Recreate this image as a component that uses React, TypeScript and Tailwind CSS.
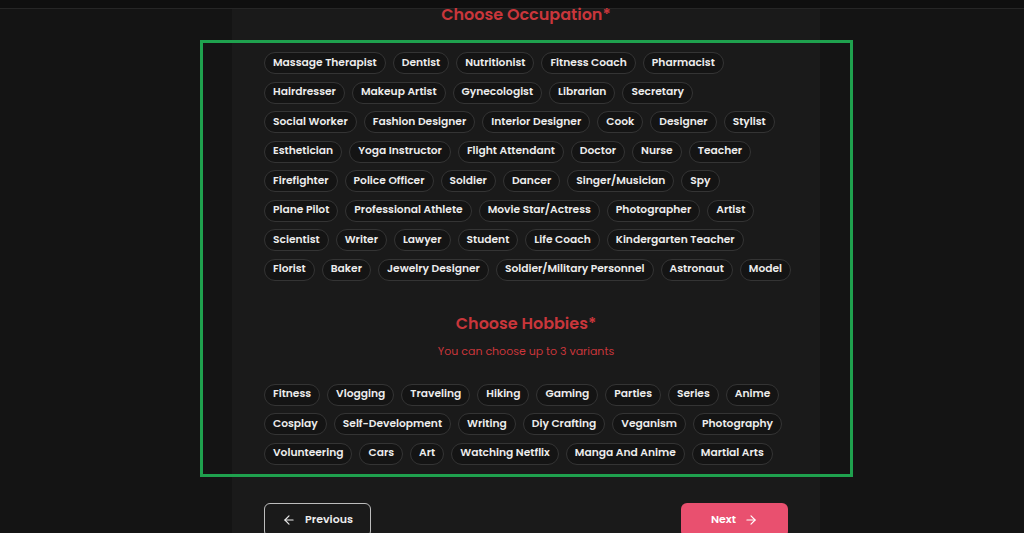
import { ArrowLeft, ArrowRight } from "lucide-react"

const occupationRows: string[][] = [
  ["Massage Therapist", "Dentist", "Nutritionist", "Fitness Coach", "Pharmacist"],
  ["Hairdresser", "Makeup Artist", "Gynecologist", "Librarian", "Secretary"],
  ["Social Worker", "Fashion Designer", "Interior Designer", "Cook", "Designer", "Stylist"],
  ["Esthetician", "Yoga Instructor", "Flight Attendant", "Doctor", "Nurse", "Teacher"],
  ["Firefighter", "Police Officer", "Soldier", "Dancer", "Singer/Musician", "Spy"],
  ["Plane Pilot", "Professional Athlete", "Movie Star/Actress", "Photographer", "Artist"],
  ["Scientist", "Writer", "Lawyer", "Student", "Life Coach", "Kindergarten Teacher"],
  ["Florist", "Baker", "Jewelry Designer", "Soldier/Military Personnel", "Astronaut", "Model"],
]

const hobbyRows: string[][] = [
  ["Fitness", "Vlogging", "Traveling", "Hiking", "Gaming", "Parties", "Series", "Anime"],
  ["Cosplay", "Self-Development", "Writing", "Diy Crafting", "Veganism", "Photography"],
  ["Volunteering", "Cars", "Art", "Watching Netflix", "Manga And Anime", "Martial Arts"],
]

function Chip({ label }: { label: string }) {
  return (
    <button className="h-[22px] shrink-0 whitespace-nowrap rounded-full border border-[#343434] bg-[#141414] px-[8px] text-[10.7px] font-semibold leading-none text-[#ececec]">
      {label}
    </button>
  )
}

function ChipRows({ rows }: { rows: string[][] }) {
  return (
    <div className="flex flex-col gap-y-[7.5px]">
      {rows.map((row, i) => (
        <div key={i} className="flex gap-x-[7px]">
          {row.map((label) => (
            <Chip key={label} label={label} />
          ))}
        </div>
      ))}
    </div>
  )
}

export default function App() {
  return (
    <div
      className="relative h-[533px] w-[1024px] overflow-hidden bg-[#141414]"
      style={{ fontFamily: "Poppins, Inter, 'Noto Sans', sans-serif" }}
    >
      <div className="h-[9px] border-b border-[#262626] bg-[#0f0f0f]" />

      <div className="ml-[232px] flex h-[524px] w-[588px] flex-col bg-[#1a1a1a] px-8">
        <h2 className="mt-[-2px] text-center text-[16px] font-semibold leading-[16px] text-[#c9363b]">
          Choose Occupation*
        </h2>

        <div className="mt-[29px]">
          <ChipRows rows={occupationRows} />
        </div>

        <h2 className="mt-[35px] text-center text-[16px] font-semibold leading-[16px] text-[#c9363b]">
          Choose Hobbies*
        </h2>
        <p className="mt-[13px] text-center text-[11px] leading-[12px] text-[#c9363b]">
          You can choose up to 3 variants
        </p>

        <div className="mt-[27px]">
          <ChipRows rows={hobbyRows} />
        </div>

        <div className="mt-[38px] flex items-start justify-between">
          <button className="flex h-[34px] w-[107px] items-center justify-center gap-[9px] rounded-[6px] border border-[#bdbdbd] text-[11px] font-semibold leading-none text-[#ececec]">
            <ArrowLeft size={14} strokeWidth={2} />
            Previous
          </button>
          <button className="flex h-[34px] w-[107px] items-center justify-center gap-[8px] rounded-[6px] bg-[#e9506f] text-[11px] font-semibold leading-none text-white">
            Next
            <ArrowRight size={14} strokeWidth={2} />
          </button>
        </div>
      </div>

      <div className="pointer-events-none absolute left-[200px] top-[40px] h-[437px] w-[653px] border-[3px] border-[#1fa14e]" />
    </div>
  )
}
